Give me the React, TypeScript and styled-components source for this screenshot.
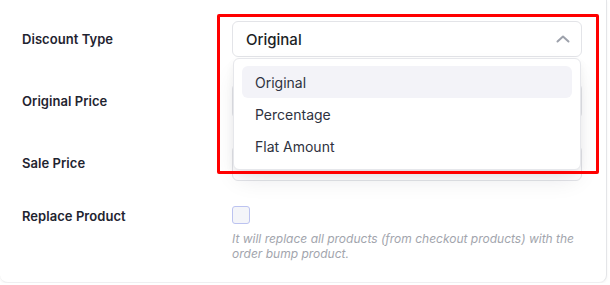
import React from "react";
import styled, { createGlobalStyle } from "styled-components";

const Global = createGlobalStyle`
  html, body { margin: 0; padding: 0; background: #ffffff; }
  body { font-family: Inter, "Noto Sans", "Liberation Sans", sans-serif; -webkit-font-smoothing: antialiased; }
  * { box-sizing: border-box; }
`;

const Card = styled.div`
  position: relative;
  width: 607px;
  height: 283px;
  background: #fff;
  border-right: 1px solid #e4e5e8;
  border-bottom: 1px solid #efeff1;
  border-radius: 0 0 8px 8px;
  box-shadow: 0 1px 3px rgba(0, 0, 0, 0.05);
  padding: 21px 0 0 22px;
  display: flex;
  flex-direction: column;
  gap: 26px;
`;

const Row = styled.div<{ $top?: boolean }>`
  display: grid;
  grid-template-columns: 210px 350px;
  align-items: ${(p) => (p.$top ? "start" : "center")};
`;

const Label = styled.div`
  font-size: 13px;
  font-weight: 600;
  color: #1f2430;
  letter-spacing: 0.05px;
  line-height: 18px;
`;

const Field = styled.div`
  position: relative;
`;

const SelectBox = styled.div`
  height: 36px;
  border: 1px solid #e3e4e8;
  border-radius: 6px;
  background: #fff;
  display: flex;
  align-items: center;
  justify-content: space-between;
  padding: 0 11px 0 13px;
  font-size: 15px;
  font-weight: 500;
  color: #1c1f26;
`;

const Input = styled.div`
  height: 36px;
  border: 1px solid #e3e4e8;
  border-radius: 6px;
  background: #fff;
`;

const Menu = styled.div`
  position: absolute;
  top: 37px;
  left: 1px;
  right: 1px;
  z-index: 5;
  background: #fff;
  border: 1px solid #e6e7eb;
  border-radius: 6px;
  padding: 7px 8px 7px 8px;
  box-shadow: 0 12px 24px -6px rgba(20, 24, 40, 0.12), 0 4px 8px rgba(20, 24, 40, 0.05);
  display: flex;
  flex-direction: column;
`;

const Item = styled.div<{ $active?: boolean }>`
  height: 32px;
  display: flex;
  align-items: center;
  padding-left: 13px;
  border-radius: 6px;
  font-size: 14px;
  color: #2e3240;
  background: ${(p) => (p.$active ? "#f3f3f8" : "transparent")};
`;

const Checkbox = styled.div`
  width: 18px;
  height: 18px;
  border: 1px solid #bcc3f0;
  border-radius: 3px;
  background: #f4f5f9;
  margin-top: -1px;
`;

const Help = styled.p`
  margin: 7px 0 0;
  font-size: 12px;
  line-height: 15px;
  font-style: italic;
  color: #a2a5ad;
  white-space: nowrap;
`;

const Highlight = styled.div`
  position: absolute;
  left: 217px;
  top: 14px;
  width: 382px;
  height: 160px;
  border: 3px solid #ff0000;
  border-radius: 2px;
  z-index: 10;
  pointer-events: none;
`;

export default function App() {
  return (
    <>
      <Global />
      <Card>
        <Row>
          <Label>Discount Type</Label>
          <Field>
            <SelectBox>
              <span>Original</span>
              <svg width="14" height="8" viewBox="0 0 14 8" fill="none">
                <path d="M1.5 6.5 L7 1.5 L12.5 6.5" stroke="#9da1ab" strokeWidth="2" strokeLinecap="round" strokeLinejoin="round" />
              </svg>
            </SelectBox>
            <Menu>
              <Item $active>Original</Item>
              <Item>Percentage</Item>
              <Item>Flat Amount</Item>
            </Menu>
          </Field>
        </Row>
        <Row>
          <Label>Original Price</Label>
          <Input />
        </Row>
        <Row>
          <Label>Sale Price</Label>
          <Input />
        </Row>
        <Row $top>
          <Label>Replace Product</Label>
          <div>
            <Checkbox />
            <Help>
              It will replace all products (from checkout products) with the
              <br />
              order bump product.
            </Help>
          </div>
        </Row>
        <Highlight />
      </Card>
    </>
  );
}
